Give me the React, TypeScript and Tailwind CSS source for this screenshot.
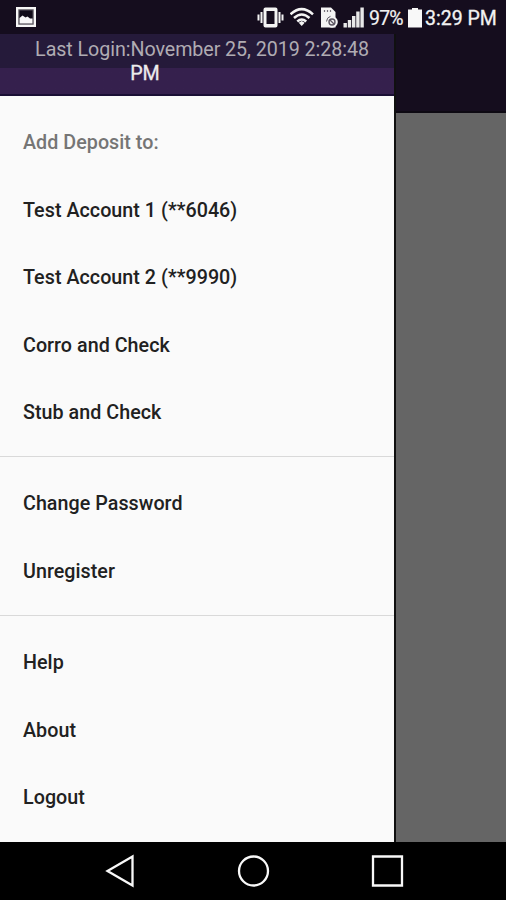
const accounts = [
  "Test Account 1 (**6046)",
  "Test Account 2 (**9990)",
  "Corro and Check",
  "Stub and Check",
];

const sections = [
  ["Change Password", "Unregister"],
  ["Help", "About", "Logout"],
];

const VibrateIcon = () => (
  <svg className="w-7 h-6 shrink-0" viewBox="0 0 28 24" fill="#f4f4f4">
    <path
      fillRule="evenodd"
      d="M8.500 1.500h10a2 2 0 0 1 2 2v16a2 2 0 0 1-2 2h-10a2 2 0 0 1-2-2v-16a2 2 0 0 1 2-2zM9.500 5v13h8v-13z"
    />
    <path d="M3.500 6h2v11h-2zM0.500 8.500h2v6h-2zM21.500 6h2v11h-2zM24.500 8.500h2v6h-2z" />
  </svg>
);

const WifiIcon = () => (
  <svg className="w-6 h-6 shrink-0" viewBox="0 0 24 24" fill="none">
    <g stroke="#f4f4f4" strokeWidth="2.500">
      <path d="M0.500 8.300Q11.700 -2 23 8.300" />
      <path d="M4 12Q11.700 5 19.500 12" />
      <path d="M7.300 15.500Q11.700 11.500 16.200 15.500" />
    </g>
    <path d="M11.700 15l3 1.800-3 3.200-3-3.200z" fill="#f4f4f4" />
  </svg>
);

const SimIcon = () => (
  <svg className="w-[18px] h-6 shrink-0" viewBox="0 0 18 24">
    <path d="M1 1.500h10l4.500 4.500v15.500H1z" fill="#f4f4f4" />
    <path d="M4.500 4v2M7.500 4v2M10.500 4v2" stroke="#77727b" strokeWidth="1.200" />
    <circle cx="12" cy="16" r="5.800" fill="#f4f4f4" />
    <path d="M6.500 15.500a5.800 5.800 0 0 1 4-5.200" fill="none" stroke="#5b5561" />
    <circle cx="12" cy="16" r="3" fill="none" stroke="#5b5561" strokeWidth="1.400" />
    <path d="M10 14l4 4" stroke="#5b5561" strokeWidth="1.300" />
  </svg>
);

const SignalIcon = () => (
  <svg className="w-[22px] h-6 shrink-0" viewBox="0 0 22 24" fill="#e8e8e8">
    <path d="M0.500 17h3.400v4.500h-3.400zM4.800 14h3.400v7.500h-3.400zM9 10h3.400v11.500h-3.400zM13.200 5.500h3.400v16h-3.400zM17.400 1.500h3.400v20h-3.400z" />
  </svg>
);

const StatusBar = () => (
  <div className="h-[34px] flex flex-row items-center pt-[2px] bg-[#150d1e] text-[#f2f2f2] text-[19.500px]">
    <svg className="w-5 h-5 ml-4 mb-[2px] shrink-0" viewBox="0 0 20 20">
      <path d="M0 0h20v20H0z" fill="#f7f7f7" />
      <path d="M2.300 2.300h15.400v15.400h-15.400z" fill="#55515a" />
      <path d="M3.500 3.500h13v13h-13z" fill="#100b18" />
      <path d="M3.500 11l3-2.500 3 2 2-1 2.500 2h2.500v5h-13z" fill="#f7f7f7" />
    </svg>
    <div className="flex flex-row items-center ml-auto w-[249px]">
      <VibrateIcon />
      <div className="ml-[5px] flex">
        <WifiIcon />
      </div>
      <div className="ml-1.5 flex">
        <SimIcon />
      </div>
      <div className="ml-[5px] flex">
        <SignalIcon />
      </div>
      <span className="w-[39px] ml-[4px] pt-[2px] tracking-[-0.800px] whitespace-nowrap [-webkit-text-stroke:0.200px_#f2f2f2]">
        97%
      </span>
      <svg className="w-[14px] h-5 shrink-0" viewBox="0 0 14 20">
        <path d="M4 0h6v1.500h4v18h-14v-18h4z" fill="#f8f8f8" />
      </svg>
      <span className="ml-[3px] pt-[2px] whitespace-nowrap [-webkit-text-stroke:0.300px_#f2f2f2]">
        3:29 PM
      </span>
    </div>
  </div>
);

const MenuItem = ({ label }: { label: string }) => (
  <li className="h-[67.500px] flex items-center pl-[23px] text-[#212121] font-medium">
    {label}
  </li>
);

const Drawer = () => (
  <div className="w-[394px] flex flex-col bg-[#fafafa] text-[19.700px] tracking-[0.040px]">
    <div className="h-[62px] shrink-0 bg-linear-to-b from-[#251a3a] from-[34px] to-[#35204d] to-[34px] border-b-2 border-[#1a0f35] text-center leading-[23px] pt-[4px]">
      <p className="text-[#b0acb3] pl-[10px] tracking-[-0.070px]">
        Last Login:November 25, 2019 2:28:48
      </p>
      <p className="text-[#ececec] pr-[104px] pt-px [-webkit-text-stroke:0.300px_#ececec]">PM</p>
    </div>
    <ul className="pt-[13.200px] pb-[9.700px]">
      <li className="h-[67.500px] flex items-center pl-[23px] text-[#757575] font-medium">
        Add Deposit to:
      </li>
      {accounts.map((account) => (
        <MenuItem key={account} label={account} />
      ))}
    </ul>
    {sections.map((items) => (
      <ul key={items[0]} className="border-t border-[#d9d9d9] pt-[12.800px] pb-[10.100px]">
        {items.map((item) => (
          <MenuItem key={item} label={item} />
        ))}
      </ul>
    ))}
  </div>
);

const NavigationBar = () => (
  <div className="h-[58px] shrink-0 bg-black">
    <svg className="w-full h-full" viewBox="0 0 506 58" fill="none" stroke="#f8f8f8" strokeWidth="2.300">
      <path d="M107.500 29L132.500 14.500V43.500Z" />
      <circle cx="253.500" cy="29" r="14.500" />
      <path d="M373 14.500h29v29h-29z" />
    </svg>
  </div>
);

const App = () => {
  return (
    <div className="w-[506px] h-[900px] flex flex-col overflow-hidden bg-black font-['Roboto',sans-serif]">
      <StatusBar />
      <div className="h-[808px] flex flex-row overflow-hidden">
        <Drawer />
        <div className="flex-1 flex flex-col border-l-2 border-[#101010] bg-[#656565]">
          <div className="h-[79px] bg-[#150d1e] border-b-2 border-[#0d0912]" />
        </div>
      </div>
      <NavigationBar />
    </div>
  );
};

export default App;
